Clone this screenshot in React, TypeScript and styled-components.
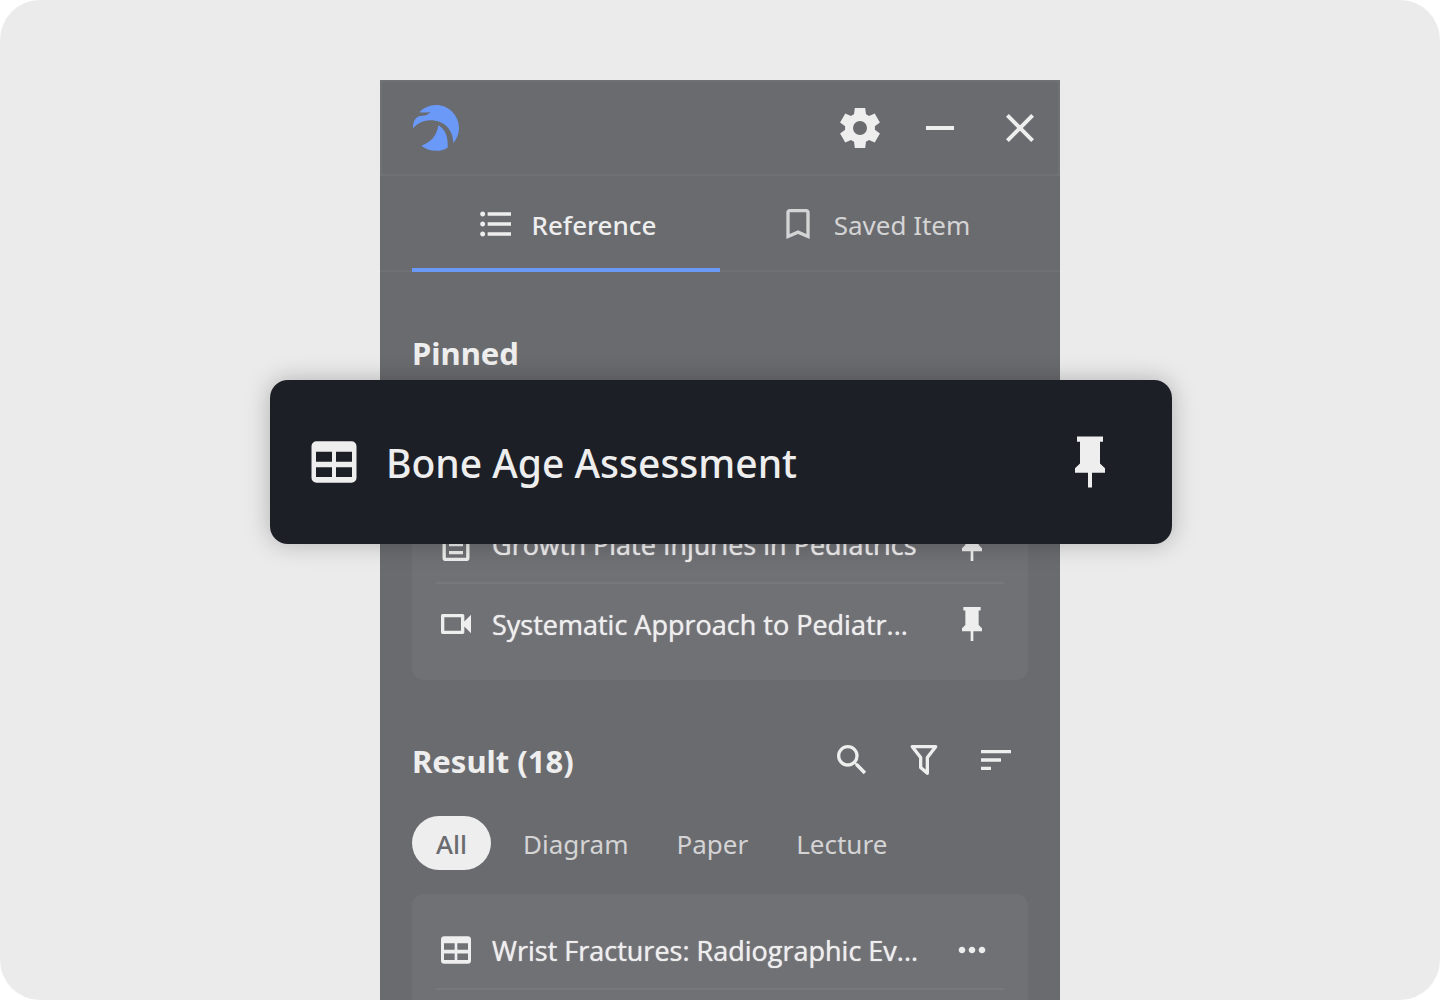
import React from "react";
import styled, { createGlobalStyle } from "styled-components";
import {
  MdBookmarkBorder,
  MdClose,
  MdFormatListBulleted,
  MdMoreHoriz,
  MdOutlineVideocam,
  MdRemove,
  MdSearch,
  MdSort,
} from "react-icons/md";

const color = {
  page: "#ebebeb",
  panel: "#6a6b6f",
  card: "#707175",
  line: "#77787c",
  headerLine: "#707174",
  text: "#eeeeee",
  muted: "#d4d4d5",
  accent: "#6a99f7",
  lifted: "#1d1f27",
};

const font = {
  ui: `"Noto Sans", "Open Sans", sans-serif`,
  list: `"Open Sans", "Noto Sans", sans-serif`,
};

const GlobalStyle = createGlobalStyle`
  *, *::before, *::after { box-sizing: border-box; }
  body { margin: 0; background: #ffffff; }
  button { font: inherit; color: inherit; border: 0; padding: 0; background: none; cursor: pointer; }
  h2, ul { margin: 0; padding: 0; }
  ul { list-style: none; }
  svg { display: block; flex: none; }
`;

const Stage = styled.main`
  height: 100vh;
  overflow: hidden;
  display: flex;
  justify-content: center;
  padding-top: 80px;
  border-radius: 40px;
  background: ${color.page};
  color: ${color.text};
  font-family: ${font.ui};
  font-size: 26px;
  line-height: 36px;
`;

const Panel = styled.section`
  width: 680px;
  background: ${color.panel};
`;

const Header = styled.header`
  display: flex;
  align-items: center;
  height: 96px;
  padding-left: 30px;
  border: 2px solid ${color.headerLine};
`;

const WindowControls = styled.div`
  display: flex;
  margin-left: auto;
  margin-right: -2px;
`;

const WindowButton = styled.button`
  display: grid;
  place-items: center;
  width: 80px;
  height: 80px;
  font-size: 48px;
`;

const Tabs = styled.nav`
  display: flex;
  height: 96px;
  padding: 0 32px;
  box-shadow: inset 0 -2px ${color.headerLine};
`;

const Tab = styled.button<{ $active?: boolean }>`
  display: flex;
  flex: 1;
  align-items: center;
  justify-content: center;
  gap: 16px;
  font-weight: ${(p) => (p.$active ? 500 : 400)};
  color: ${(p) => (p.$active ? color.text : color.muted)};
  box-shadow: ${(p) => (p.$active ? `inset 0 -4px ${color.accent}` : "none")};
`;

const Label = styled.span`
  padding-top: 2px;
`;

const Section = styled.section`
  padding: 0 32px;
  margin-top: 60px;
`;

const SectionHeader = styled.div`
  display: flex;
  align-items: center;
  justify-content: space-between;
  height: 40px;
  padding-right: 12px;
`;

const Title = styled.h2`
  padding-top: 2px;
  font-size: 31px;
  line-height: 40px;
  font-weight: 700;
`;

const Tools = styled.div`
  display: flex;
  gap: 32px;
`;

const IconButton = styled.button`
  display: grid;
  place-items: center;
  font-size: 40px;
`;

const Filters = styled.div`
  display: flex;
  gap: 16px;
  margin-top: 36px;
`;

const Chip = styled.button<{ $active?: boolean }>`
  height: 54px;
  padding: 2px ${(p) => (p.$active ? 24 : 16)}px 0;
  border-radius: 27px;
  font-weight: ${(p) => (p.$active ? 500 : 400)};
  color: ${(p) => (p.$active ? color.panel : color.muted)};
  background: ${(p) => (p.$active ? color.text : "transparent")};
`;

const Card = styled.ul<{ $spaced?: boolean }>`
  && {
    margin-top: ${(p) => (p.$spaced ? 36 : 24)}px;
    padding: 16px 24px;
  }
  border-radius: 12px;
  background: ${color.card};
`;

const Row = styled.li`
  position: relative;
  display: flex;
  align-items: center;
  gap: 16px;
  height: 80px;
  padding-right: 12px;
  font-family: ${font.list};
  font-size: 27px;
  font-weight: 500;
  text-shadow: 0 0 1px ${color.text};

  &:not(:last-child) {
    box-shadow: inset 0 -2px ${color.line};
  }
`;

const Name = styled(Label)`
  flex: 1;
  white-space: nowrap;
`;

const Lifted = styled.div`
  position: absolute;
  z-index: 1;
  inset: -44px -168px -40px -166px;
  display: flex;
  align-items: center;
  gap: 22px;
  padding: 0 52px 0 34px;
  border-radius: 18px;
  background: ${color.lifted};
  box-shadow: 0 0 24px rgba(0, 0, 0, 0.25);
  font-family: ${font.ui};
  font-size: 39px;
  line-height: 54px;
  text-shadow: none;
`;

const Logo = () => (
  <svg width="48" height="48" viewBox="96 72 144 144" fill={color.accent} role="img" aria-label="Home">
    <path d="M118 97C130 84 148 75 168 75C206 75 237 106 237 144C237 161 231 177 220 189C219 150 194 121 151 121C131 121 113 129 99 145C98 125 106 107 128 107C139 107 145 103 151 96C140 98 129 98 118 97Z" />
    <path d="M175 136C196 147 205 172 203 203C178 218 148 215 124 197C152 188 171 167 175 136Z" />
  </svg>
);

const GEAR_TOOTH = "M-2.6 -10h5.2l.5 4h-6.2z";

const GearIcon = () => (
  <svg width="48" height="48" viewBox="-12 -12 24 24" fill="currentColor" aria-hidden="true">
    {[0, 60, 120, 180, 240, 300].map((angle) => (
      <path key={angle} d={GEAR_TOOTH} transform={`rotate(${angle})`} />
    ))}
    <circle r="5.5" fill="none" stroke="currentColor" strokeWidth="4" />
  </svg>
);

const TableIcon = ({ size = 40 }: { size?: number }) => (
  <svg width={size} height={size} viewBox="0 0 24 24" fill="currentColor" aria-hidden="true">
    <path
      fillRule="evenodd"
      d="M5 3.7h14a2 2 0 0 1 2 2v12.6a2 2 0 0 1-2 2H5a2 2 0 0 1-2-2V5.7a2 2 0 0 1 2-2ZM4.8 7.9v4h6.4v-4ZM12.8 7.9v4h6.4v-4ZM4.8 14.1v3.9h6.4v-3.9ZM12.8 14.1v3.9h6.4v-3.9Z"
    />
  </svg>
);

const DocIcon = () => (
  <svg width="40" height="40" viewBox="0 0 24 24" fill="none" stroke="currentColor" strokeWidth="2" aria-hidden="true">
    <rect x="4.9" y="3" width="14.2" height="18.2" rx="1" />
    <path d="M7.8 8h8.4M7.8 12.4h8.4M7.8 17.2h8.4" />
  </svg>
);

const PinIcon = ({ size = 40 }: { size?: number }) => (
  <svg width={size} height={size} viewBox="0 0 24 24" fill="currentColor" aria-hidden="true">
    <path d="M6.8 1.8h10.4v2.1H16v8.7l2 1.9v1.8h-5.2v5.9h-1.6v-5.9H6V14.500l2-1.9V3.900H6.8Z" />
  </svg>
);

const FunnelIcon = () => (
  <svg
    width="40"
    height="40"
    viewBox="0 0 24 24"
    fill="none"
    stroke="currentColor"
    strokeWidth="2"
    strokeLinejoin="round"
    aria-hidden="true"
  >
    <path d="M5 4h14l-5 6.500v9.500l-4-3.500v-6Z" />
  </svg>
);

export default function App() {
  return (
    <>
      <GlobalStyle />
      <Stage>
        <Panel>
          <Header>
            <Logo />
            <WindowControls>
              <WindowButton aria-label="Settings"><GearIcon /></WindowButton>
              <WindowButton aria-label="Minimize"><MdRemove /></WindowButton>
              <WindowButton aria-label="Close"><MdClose /></WindowButton>
            </WindowControls>
          </Header>

          <Tabs>
            <Tab $active><MdFormatListBulleted size={40} /><Label>Reference</Label></Tab>
            <Tab><MdBookmarkBorder size={40} /><Label>Saved Item</Label></Tab>
          </Tabs>

          <Section>
            <SectionHeader>
              <Title>Pinned</Title>
            </SectionHeader>
            <Card $spaced>
              <Row>
                <Lifted>
                  <TableIcon size={60} />
                  <Name>Bone Age Assessment</Name>
                  <IconButton aria-label="Unpin"><PinIcon size={60} /></IconButton>
                </Lifted>
              </Row>
              <Row>
                <DocIcon />
                <Name>Growth Plate Injuries in Pediatrics</Name>
                <IconButton aria-label="Unpin"><PinIcon /></IconButton>
              </Row>
              <Row>
                <MdOutlineVideocam size={40} />
                <Name>Systematic Approach to Pediatr...</Name>
                <IconButton aria-label="Unpin"><PinIcon /></IconButton>
              </Row>
            </Card>
          </Section>

          <Section>
            <SectionHeader>
              <Title>Result (18)</Title>
              <Tools>
                <IconButton aria-label="Search"><MdSearch /></IconButton>
                <IconButton aria-label="Filter"><FunnelIcon /></IconButton>
                <IconButton aria-label="Sort"><MdSort /></IconButton>
              </Tools>
            </SectionHeader>
            <Filters>
              <Chip $active>All</Chip>
              <Chip>Diagram</Chip>
              <Chip>Paper</Chip>
              <Chip>Lecture</Chip>
            </Filters>
            <Card>
              <Row>
                <TableIcon />
                <Name>Wrist Fractures: Radiographic Ev...</Name>
                <IconButton aria-label="More"><MdMoreHoriz /></IconButton>
              </Row>
              <Row />
            </Card>
          </Section>
        </Panel>
      </Stage>
    </>
  );
}
